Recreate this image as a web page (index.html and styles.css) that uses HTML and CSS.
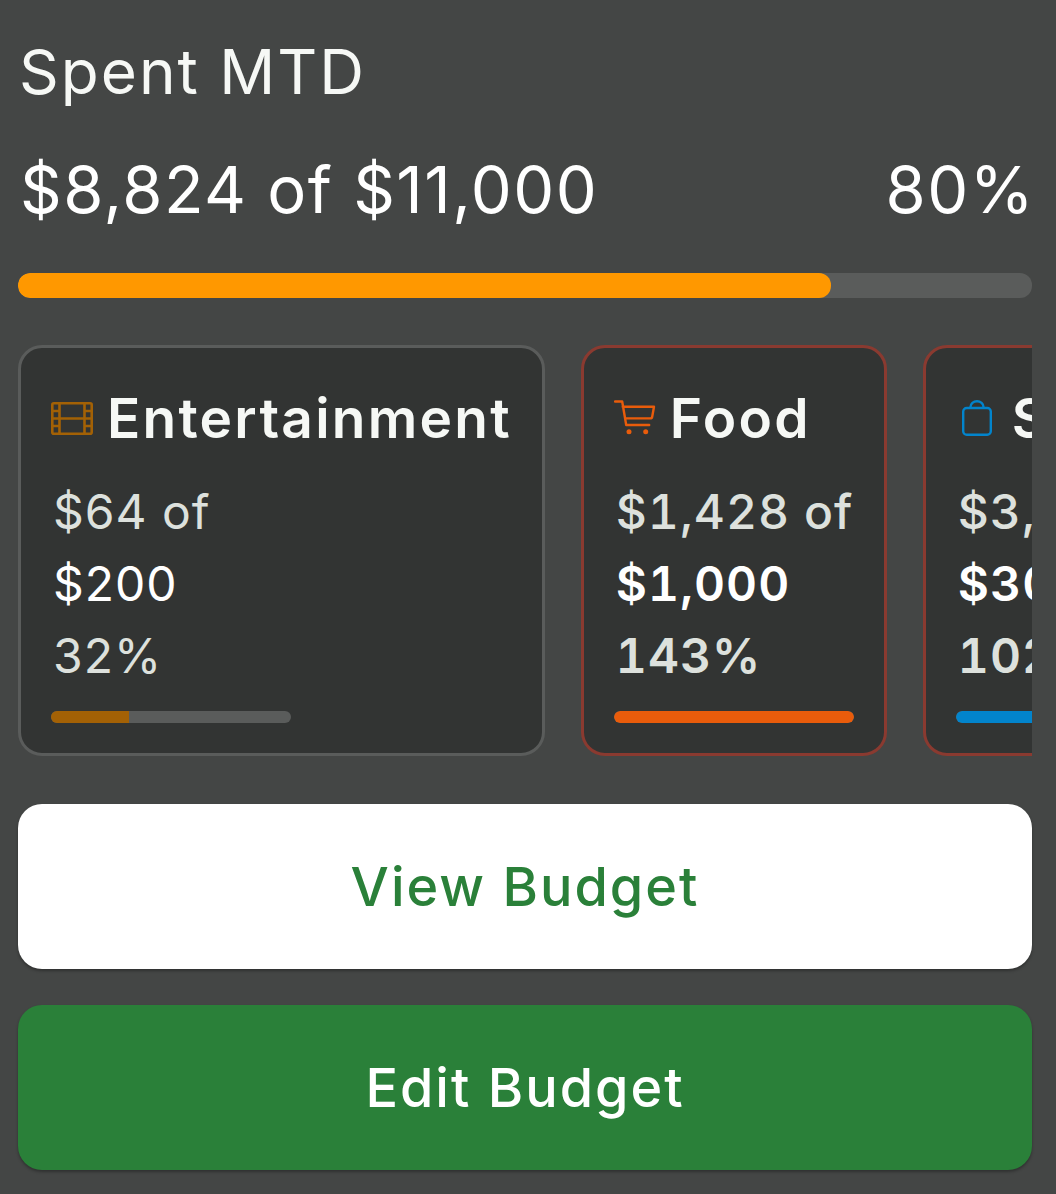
FILE: index.html
```html
<!DOCTYPE html>
<html lang="en">
<head>
<meta charset="utf-8">
<title>Budget</title>
<link rel="stylesheet" href="styles.css">
</head>
<body>
<main class="page">
  <h1 class="title">Spent MTD</h1>
  <div class="summary"><span>$8,824 of $11,000</span><span>80%</span></div>
  <div class="track main-track"><div class="fill fill-main"></div></div>
  <div class="cards">
    <section class="card">
      <div class="card-head">
        <svg class="icon icon-film" viewBox="0 0 42 33" fill="none" stroke="currentColor" stroke-width="2.6"><rect x="1.3" y="1.3" width="39.4" height="30.4" rx="1.5"/><path d="M8.5 1.3v30.4M33.5 1.3v30.4M8.5 16.5h25M1.3 9h7.2M1.3 16.5h7.2M1.3 24h7.2M33.5 9h7.2M33.5 16.5h7.2M33.5 24h7.2"/></svg>
        <h2 class="card-title">Entertainment</h2>
      </div>
      <p class="line muted">$64 of</p>
      <p class="line">$200</p>
      <p class="line muted">32%</p>
      <div class="track small-track"><div class="fill fill-ent"></div></div>
    </section>
    <section class="card over">
      <div class="card-head">
        <svg class="icon icon-cart" viewBox="0 0 42 36" fill="none" stroke="currentColor" stroke-width="2.4" stroke-linecap="round" stroke-linejoin="round"><path d="M1 1.5h7.2l4 23.5h23M8.7 6.7h31.3l-1.8 10a2 2 0 0 1-2 1.7H11.6"/><circle cx="15" cy="31.7" r="2.5" fill="currentColor" stroke="none"/><circle cx="31.7" cy="31.7" r="2.5" fill="currentColor" stroke="none"/></svg>
        <h2 class="card-title">Food</h2>
      </div>
      <p class="line muted strong-m">$1,428 of</p>
      <p class="line strong">$1,000</p>
      <p class="line muted strong">143%</p>
      <div class="track small-track"><div class="fill fill-food"></div></div>
    </section>
    <section class="card over">
      <div class="card-head">
        <svg class="icon icon-bag" viewBox="0 0 30 36" fill="none" stroke="currentColor" stroke-width="2.4" stroke-linejoin="round"><rect x="1.2" y="8" width="27.6" height="26.8" rx="3.5"/><path d="M8.5 8V7a6.5 5.8 0 0 1 13 0v1"/></svg>
        <h2 class="card-title">Shopping</h2>
      </div>
      <p class="line muted strong-m">$3,060 of</p>
      <p class="line strong">$300</p>
      <p class="line muted strong">102%</p>
      <div class="track small-track"><div class="fill fill-shop"></div></div>
    </section>
  </div>
  <button class="btn btn-light" type="button">View Budget</button>
  <button class="btn btn-green" type="button">Edit Budget</button>
</main>
</body>
</html>
```
FILE: styles.css
```css
* { box-sizing: border-box; }
html, body { margin: 0; height: 100%; }
body {
  background: #444645;
  font-family: Inter, "Noto Sans", sans-serif;
  color: #f6f8f5;
  overflow: hidden;
}
.page { padding: 36px 24px 0 18px; }
.title {
  margin: 0 0 0 1px;
  font-size: 62px;
  line-height: 72px;
  font-weight: 400;
  letter-spacing: 2px;
}
.summary {
  display: flex;
  justify-content: space-between;
  margin: 40px -3px 0 2px;
  font-size: 65px;
  line-height: 84px;
  letter-spacing: 1.5px;
  color: #fff;
}
.track { background: #5a5c5b; overflow: hidden; }
.main-track { height: 25px; border-radius: 12px; margin-top: 41px; }
.small-track { width: 240px; height: 12px; border-radius: 6px; margin-top: 19px; }
.fill { height: 100%; }
.fill-main { width: 80.2%; background: #ff9800; border-radius: 12px; }
.fill-ent { width: 32.5%; background: #a36105; }
.fill-food { width: 100%; background: #e95c0b; border-radius: 6px; }
.fill-shop { width: 100%; background: #0284cc; border-radius: 6px; }
.cards {
  display: flex;
  gap: 36px;
  margin-top: 47px;
  overflow: hidden;
}
.card {
  flex: none;
  height: 411px;
  padding: 28px 30px 0;
  background: #323433;
  border: 3px solid #5a5c5b;
  border-radius: 24px;
}
.card.over { border-color: #8a3a30; }
.card-head { display: flex; align-items: center; height: 84px; margin-bottom: 16px; }
.card-title {
  margin: 0;
  font-size: 55px;
  line-height: 84px;
  font-weight: 600;
  letter-spacing: 2.25px;
  white-space: nowrap;
}
.icon { flex: none; margin-right: 14px; }
.icon-film { width: 42px; height: 33px; color: #a36105; }
.icon-cart { width: 42px; height: 36px; color: #e95c0b; }
.icon-bag { width: 30px; height: 36px; margin-left: 6px; margin-right: 20px; color: #0284cc; }
.line {
  margin: 0 0 0 2px;
  font-size: 48px;
  line-height: 72px;
  letter-spacing: 1px;
  color: #fff;
  white-space: nowrap;
}
.line.muted { color: #dde1dd; }
.strong-m { font-weight: 500; font-variant-numeric: tabular-nums; }
.strong { font-weight: 600; font-variant-numeric: tabular-nums; }
.btn {
  display: block;
  width: 100%;
  height: 165px;
  border: 0;
  border-radius: 24px;
  font-family: inherit;
  font-size: 54px;
  font-weight: 500;
  letter-spacing: 2px;
  box-shadow: 0 2px 3px rgba(0,0,0,.3);
}
.btn-light { margin-top: 48px; background: #fff; color: #2a8039; }
.btn-green { margin-top: 36px; background: #2a8039; color: #fff; }
```
